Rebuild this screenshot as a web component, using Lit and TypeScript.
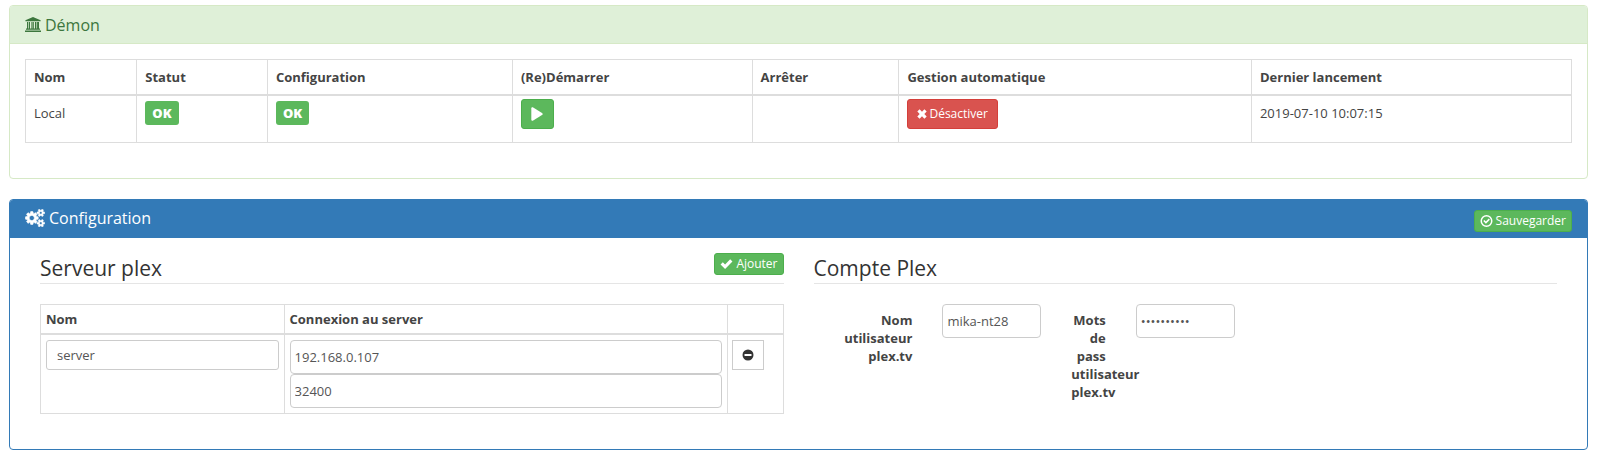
import { LitElement, html, css, svg } from "lit";
import { customElement, property } from "lit/decorators.js";

const ICONS: Record<string, { box: string; d: string }> = {
  bank: {
    box: "0 0 16 15",
    d: "M8 0L15.600 3.200V4.300H0.400V3.200ZM2 5H5V11.500H6V5H8V5H8.800V11.500H10V5H14V11.500H15V12.700H1V11.500H2ZM3.200 5H3.900V11.500H3.200ZM6.600 5H7.400V11.500H6.600ZM11.400 5H12.100V11.500H11.400ZM0 13.400H16V15H0Z",
  },
  cogs: {
    box: "0 0 1920 1792",
    d: "M896 896q0-106-75-181t-181-75-181 75-75 181 75 181 181 75 181-75 75-181zm768 512q0-52-38-90t-90-38-90 38-38 90q0 53 37.5 90.5t90.5 37.5 90.5-37.5 37.5-90.5zm0-1024q0-52-38-90t-90-38-90 38-38 90q0 53 37.5 90.5t90.5 37.5 90.5-37.5 37.5-90.5zm-384 421v185q0 10-7 19.5t-16 10.5l-155 24q-11 35-32 76 34 48 90 115 7 11 7 20 0 12-7 19-23 30-82.5 89.5t-78.5 59.5q-11 0-21-7l-115-90q-37 19-77 31-11 108-23 155-7 24-30 24h-186q-11 0-20-7.5t-10-17.5l-23-153q-34-10-75-31l-118 89q-7 7-20 7-11 0-21-8-144-133-144-160 0-9 7-19 10-14 41-53t47-61q-23-44-35-82l-152-24q-10-1-17-9.5t-7-19.5v-185q0-10 7-19.5t16-10.5l155-24q11-35 32-76-34-48-90-115-7-11-7-20 0-12 7-20 22-30 82-89t79-59q11 0 21 7l115 90q34-18 77-32 11-108 23-154 7-24 30-24h186q11 0 20 7.5t10 17.5l23 153q34 10 75 31l118-89q8-7 20-7 11 0 21 8 144 133 144 160 0 8-7 19-12 16-42 54t-45 60q23 48 34 82l152 23q10 2 17 10.5t7 19.5zm640 533v140q0 16-149 31-12 27-30 52 51 113 51 138 0 4-4 7-122 71-124 71-8 0-46-47t-52-68q-20 2-30 2t-30-2q-14 21-52 68t-46 47q-2 0-124-71-4-3-4-7 0-25 51-138-18-25-30-52-149-15-149-31v-140q0-16 149-31 13-29 30-52-51-113-51-138 0-4 4-7 4-2 35-20t59-34 30-16q8 0 46 46.5t52 67.5q20-2 30-2t30 2q51-71 92-112l6-2q4 0 124 70 4 3 4 7 0 25-51 138 17 23 30 52 149 15 149 31zm0-1024v140q0 16-149 31-12 27-30 52 51 113 51 138 0 4-4 7-122 71-124 71-8 0-46-47t-52-68q-20 2-30 2t-30-2q-14 21-52 68t-46 47q-2 0-124-71-4-3-4-7 0-25 51-138-18-25-30-52-149-15-149-31v-140q0-16 149-31 13-29 30-52-51-113-51-138 0-4 4-7 4-2 35-20t59-34 30-16q8 0 46 46.5t52 67.5q20-2 30-2t30 2q51-71 92-112l6-2q4 0 124 70 4 3 4 7 0 25-51 138 17 23 30 52 149 15 149 31z",
  },
  play: {
    box: "0 0 12 14",
    d: "M0.300 1.500C0.300 0.400 1.300 0 2.200 0.500L11 5.900C11.900 6.500 11.900 7.500 11 8.100L2.200 13.500C1.300 14 0.300 13.600 0.300 12.500Z",
  },
  cross: {
    box: "0 0 10 10",
    d: "M2.600 0.300L5 2.700 7.400 0.300 9.700 2.600 7.300 5 9.700 7.400 7.400 9.700 5 7.300 2.600 9.700 0.300 7.400 2.700 5 0.300 2.600Z",
  },
  check: {
    box: "0 0 12 10",
    d: "M0.500 5.500L2.600 3.300 4.700 5.400 9.400 0.700 11.500 2.800 4.700 9.600Z",
  },
  checkCircle: {
    box: "0 0 12 12",
    d: "M6 0a6 6 0 1 0 0 12a6 6 0 1 0 0-12zM6 1.500a4.500 4.500 0 1 1 0 9a4.500 4.500 0 1 1 0-9zM2.800 6.100L3.900 5 5.400 6.500 8.300 3.600 9.400 4.700 5.400 8.700Z",
  },
  minus: {
    box: "0 0 12 12",
    d: "M6 0.500a5.500 5.500 0 1 0 0 11a5.500 5.500 0 1 0 0-11zM2.500 5h7v2h-7z",
  },
};

@customElement("ui-icon")
export class UiIcon extends LitElement {
  @property() name = "";

  static styles = css`
    :host {
      display: inline-flex;
      flex: none;
      width: 12px;
      height: 12px;
    }
    svg {
      width: 100%;
      height: 100%;
      fill: currentColor;
      fill-rule: evenodd;
    }
  `;

  render() {
    const icon = ICONS[this.name];
    return html`<svg viewBox=${icon.box} aria-hidden="true">${svg`<path d=${icon.d}></path>`}</svg>`;
  }
}

@customElement("app-root")
export class AppRoot extends LitElement {
  static styles = css`
    :host {
      display: block;
      padding: 5px 10px 8px 9px;
      font: 13px/18px "Open Sans", "Noto Sans", sans-serif;
      color: #444;
      background: #fff;
    }
    * {
      box-sizing: border-box;
    }
    .panel {
      border: 1px solid #d6e9c6;
      border-radius: 4px;
      margin-bottom: 20px;
      overflow: hidden;
    }
    .panel.primary {
      border-color: #337ab7;
      margin-bottom: 0;
    }
    .heading {
      display: flex;
      align-items: center;
      justify-content: space-between;
      height: 38px;
      padding: 0 15px;
      color: #3c763d;
      background: #dff0d8;
      border-bottom: 1px solid #d6e9c6;
    }
    .primary .heading {
      color: #fff;
      background: #337ab7;
      border-color: #337ab7;
    }
    .title {
      display: flex;
      align-items: center;
      gap: 4px;
      margin: 0;
      font-size: 16px;
      font-weight: 400;
      line-height: 18px;
    }
    .primary .title {
      font-weight: 500;
    }
    .title ui-icon {
      width: 16px;
      height: 15px;
    }
    .primary .title ui-icon {
      width: 20px;
      height: 18px;
    }
    .primary .title ui-icon {
      stroke: currentColor;
      stroke-width: 60px;
    }
    .body {
      padding: 15px;
    }
    table {
      width: 100%;
      margin-bottom: 20px;
      table-layout: fixed;
      border-collapse: collapse;
    }
    th,
    td {
      padding: 8px;
      text-align: left;
      vertical-align: top;
      border: 1px solid #ddd;
    }
    th {
      border-bottom-width: 2px;
      font-weight: 700;
    }
    .daemon td {
      height: 47px;
    }
    .daemon .control {
      padding-top: 3px;
    }
    .daemon .state {
      padding-top: 5px;
    }
    .compact th,
    .compact td {
      padding: 5px;
    }
    .compact td:last-child {
      padding-left: 4px;
    }
    .c-name { width: 7.200%; }
    .c-state { width: 8.450%; }
    .c-config { width: 15.850%; }
    .c-start { width: 15.500%; }
    .c-stop { width: 9.500%; }
    .c-auto { width: 22.800%; }
    .c-server { width: 32.800%; }
    .c-remove { width: 56px; }
    .badge {
      display: inline-block;
      padding: 3px 7px;
      color: #fff;
      font-weight: 800;
      background: #5cb85c;
      border-radius: 3px;
    }
    button {
      display: inline-flex;
      align-items: center;
      justify-content: center;
      gap: 2px;
      margin: 0;
      padding: 0 9px;
      height: 30px;
      font: 500 12px/18px "Open Sans", "Noto Sans", sans-serif;
      color: #fff;
      background: #5cb85c;
      border: 1px solid #4cae4c;
      border-radius: 3px;
      vertical-align: top;
    }
    .play {
      width: 33px;
    }
    .play ui-icon {
      height: 14px;
    }
    .danger {
      background: #d9534f;
      border-color: #d43f3a;
    }
    .danger ui-icon {
      width: 10px;
      height: 10px;
    }
    .small {
      height: 22px;
      padding: 0 5px;
      gap: 3px;
    }
    .small ui-icon {
      width: 13px;
    }
    .primary .heading .small {
      margin-top: 5px;
    }
    .plain {
      width: 32px;
      color: #333;
      background: #fff;
      border-color: #ccc;
      border-radius: 0;
    }
    .columns {
      display: grid;
      grid-template-columns: repeat(2, minmax(0, 1fr));
      gap: 30px;
      padding: 0 15px;
    }
    .legend {
      display: flex;
      align-items: flex-start;
      justify-content: space-between;
      height: 31px;
      margin-bottom: 20px;
      border-bottom: 1px solid #e5e5e5;
    }
    h3 {
      margin: 0;
      font-size: 21px;
      font-weight: 400;
      line-height: 30px;
      color: #333;
    }
    input {
      display: block;
      width: 100%;
      height: 34px;
      margin: 0;
      padding: 0 4px;
      font: 13px/18px "Open Sans", "Noto Sans", sans-serif;
      color: #555;
      background: #fff;
      border: 1px solid #ccc;
      border-radius: 4px;
    }
    .short {
      height: 30px;
      padding: 0 10px;
      border-radius: 3px;
    }
    .account {
      display: grid;
      grid-template-columns:
        minmax(0, 2fr) minmax(0, 2fr) minmax(0, 1fr) minmax(0, 2fr) minmax(0, 5fr);
      align-items: start;
      margin: 0 -15px;
    }
    .field {
      padding: 0 15px;
    }
    label {
      padding: 7px 15px 0;
      font-weight: 700;
      text-align: right;
    }
  `;

  render() {
    return html`
      <section class="panel">
        <div class="heading">
          <h2 class="title"><ui-icon name="bank"></ui-icon>Démon</h2>
        </div>
        <div class="body">
          <table class="daemon">
            <colgroup>
              <col class="c-name" /><col class="c-state" /><col class="c-config" />
              <col class="c-start" /><col class="c-stop" /><col class="c-auto" /><col />
            </colgroup>
            <thead>
              <tr>
                <th>Nom</th>
                <th>Statut</th>
                <th>Configuration</th>
                <th>(Re)Démarrer</th>
                <th>Arrêter</th>
                <th>Gestion automatique</th>
                <th>Dernier lancement</th>
              </tr>
            </thead>
            <tbody>
              <tr>
                <td>Local</td>
                <td class="state"><span class="badge">OK</span></td>
                <td class="state"><span class="badge">OK</span></td>
                <td class="control">
                  <button class="play" type="button" aria-label="(Re)Démarrer"><ui-icon name="play"></ui-icon></button>
                </td>
                <td></td>
                <td class="control">
                  <button class="danger" type="button"><ui-icon name="cross"></ui-icon>Désactiver</button>
                </td>
                <td>2019-07-10 10:07:15</td>
              </tr>
            </tbody>
          </table>
        </div>
      </section>

      <section class="panel primary">
        <div class="heading">
          <h2 class="title"><ui-icon name="cogs"></ui-icon>Configuration</h2>
          <button class="small" type="button"><ui-icon name="checkCircle"></ui-icon>Sauvegarder</button>
        </div>
        <div class="body">
          <div class="columns">
            <div>
              <div class="legend">
                <h3>Serveur plex</h3>
                <button class="small" type="button"><ui-icon name="check"></ui-icon>Ajouter</button>
              </div>
              <table class="compact">
                <colgroup><col class="c-server" /><col /><col class="c-remove" /></colgroup>
                <thead>
                  <tr><th>Nom</th><th>Connexion au server</th><th></th></tr>
                </thead>
                <tbody>
                  <tr>
                    <td><input class="short" type="text" aria-label="Nom" .value=${"server"} /></td>
                    <td>
                      <input type="text" aria-label="Adresse" .value=${"192.168.0.107"} />
                      <input type="text" aria-label="Port" .value=${"32400"} />
                    </td>
                    <td>
                      <button class="plain" type="button" aria-label="Supprimer"><ui-icon name="minus"></ui-icon></button>
                    </td>
                  </tr>
                </tbody>
              </table>
            </div>
            <div>
              <div class="legend"><h3>Compte Plex</h3></div>
              <div class="account">
                <label for="user">Nom utilisateur plex.tv</label>
                <div class="field"><input id="user" type="text" .value=${"mika-nt28"} /></div>
                <label for="pass">Mots de pass utilisateur plex.tv</label>
                <div class="field"><input id="pass" type="password" .value=${"motdepasse"} /></div>
              </div>
            </div>
          </div>
        </div>
      </section>
    `;
  }
}
